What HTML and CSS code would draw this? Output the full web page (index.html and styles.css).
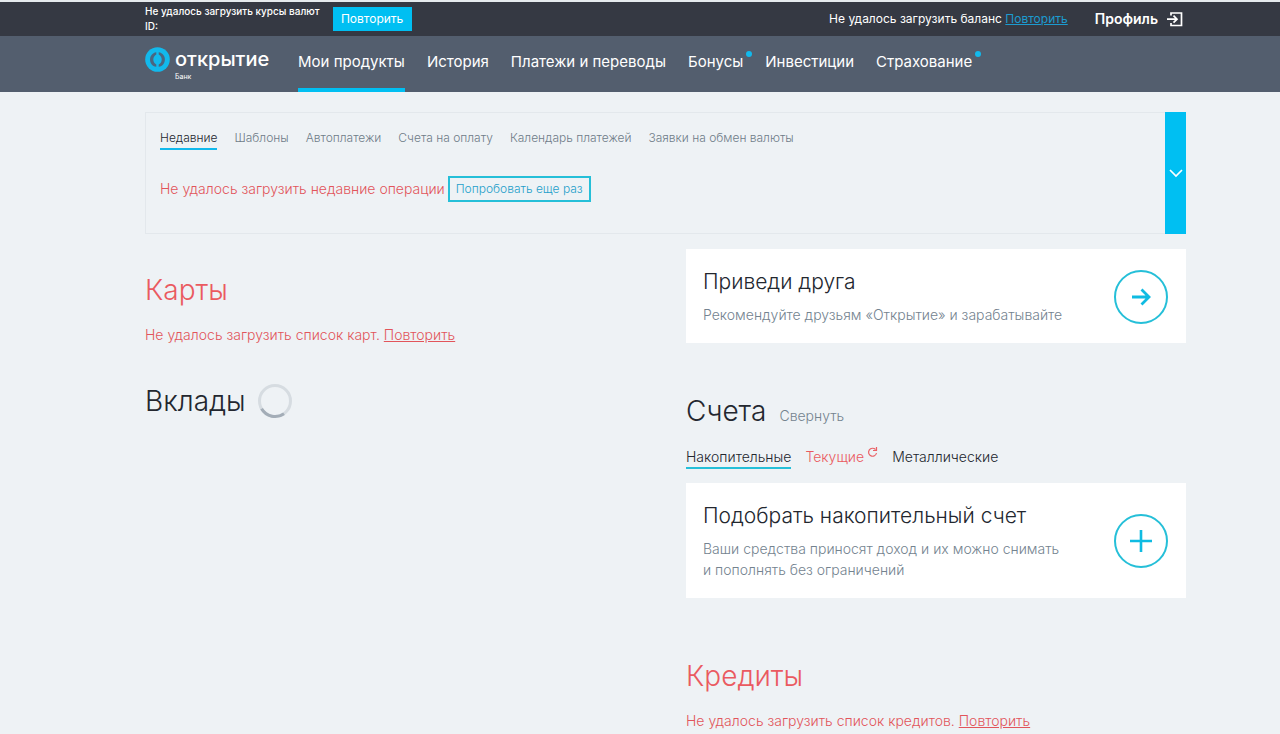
FILE: index.html
```html
<!DOCTYPE html>
<html lang="ru">
<head>
<meta charset="utf-8">
<meta name="viewport" content="width=device-width, initial-scale=1">
<title>Открытие — Мои продукты</title>
<link rel="stylesheet" href="styles.css">
</head>
<body>
<div class="topbar">
  <div class="container topbar-row">
    <p class="rates">Не удалось загрузить курсы валют<br>ID:</p>
    <button class="retry" type="button">Повторить</button>
    <p class="balance">Не удалось загрузить баланс <a href="#">Повторить</a></p>
    <a class="profile" href="#">Профиль</a>
    <button class="logout" type="button" aria-label="Выйти">
      <svg width="16" height="16" viewBox="0 0 16 16" fill="none" stroke="#fff" stroke-width="1.700"><path d="M4 4.500V2h10.500v12.500H4V12M0 8.200h9.500M6.500 4.700L10 8.200l-3.500 3.500"/></svg>
    </button>
  </div>
</div>
<header class="header">
  <div class="container header-row">
    <a class="logo" href="#">
      <svg class="logo-mark" width="25" height="25" viewBox="0 0 25 25"><circle cx="12.500" cy="12.500" r="12.300" fill="#12b9ec"/><path d="M11.300 5.200C3 6.500 3 18.500 11.300 19.800v-2.300C7.300 15.500 7.300 9.500 11.300 7.500zM13.700 5.200c8.300 1.300 8.300 13.300 0 14.600v-2.300c4-2 4-8 0-10z" fill="#4a6680"/></svg>
      <span class="logo-text">открытие<small>Банк</small></span>
    </a>
    <nav class="menu">
      <a class="active" href="#">Мои продукты</a>
      <a href="#">История</a>
      <a href="#">Платежи и переводы</a>
      <a class="marked" href="#">Бонусы</a>
      <a href="#">Инвестиции</a>
      <a class="marked" href="#">Страхование</a>
    </nav>
  </div>
</header>
<main class="container">
  <section class="panel">
    <div class="panel-body">
      <nav class="panel-tabs">
        <a class="active" href="#">Недавние</a>
        <a href="#">Шаблоны</a>
        <a href="#">Автоплатежи</a>
        <a href="#">Счета на оплату</a>
        <a href="#">Календарь платежей</a>
        <a href="#">Заявки на обмен валюты</a>
      </nav>
      <div class="panel-error">
        <span>Не удалось загрузить недавние операции</span>
        <button type="button">Попробовать еще раз</button>
      </div>
    </div>
    <button class="expand" type="button" aria-label="Развернуть">
      <svg width="14" height="9" viewBox="0 0 14 9" fill="none" stroke="#fff" stroke-width="1.700"><path d="M1 1l6 6 6-6"/></svg>
    </button>
  </section>
  <div class="columns">
    <div class="column-left">
      <section>
        <h2 class="failed">Карты</h2>
        <p class="error">Не удалось загрузить список карт. <a href="#">Повторить</a></p>
      </section>
      <section class="deposits">
        <h2>Вклады</h2>
        <svg class="spinner" width="36" height="36" viewBox="0 0 36 36" fill="none" stroke-width="3"><circle cx="18" cy="18" r="15.500" stroke="#d6dce1"/><path d="M4.600 25.800A15.500 15.500 0 0 0 27 30.700" stroke="#a3adb7"/></svg>
      </section>
    </div>
    <div class="column-right">
      <article class="card">
        <div>
          <h3>Приведи друга</h3>
          <p>Рекомендуйте друзьям «Открытие» и зарабатывайте</p>
        </div>
        <button class="round" type="button" aria-label="Пригласить">
          <svg width="22" height="22" viewBox="0 0 22 22" fill="none" stroke="#0fbbe2" stroke-width="2.800"><path d="M2 11h17M11.500 3.500L19 11l-7.500 7.500"/></svg>
        </button>
      </article>
      <section class="accounts">
        <div class="accounts-head">
          <h2>Счета</h2>
          <button class="collapse" type="button">Свернуть</button>
        </div>
        <nav class="account-tabs">
          <a class="active" href="#">Накопительные</a>
          <a class="failed" href="#">Текущие
            <svg width="11" height="11" viewBox="0 0 11 11" fill="none" stroke="#ea6166" stroke-width="1.200"><path d="M8.500 2.500A4 4 0 1 0 9.500 6M9.500 0v3.500H6"/></svg></a>
          <a href="#">Металлические</a>
        </nav>
        <article class="card">
          <div>
            <h3>Подобрать накопительный счет</h3>
            <p>Ваши средства приносят доход и их можно снимать<br>и пополнять без ограничений</p>
          </div>
          <button class="round" type="button" aria-label="Открыть счет">
            <svg width="22" height="22" viewBox="0 0 22 22" fill="none" stroke="#0fbbe2" stroke-width="2.600"><path d="M0 11h22M11 0v22"/></svg>
          </button>
        </article>
      </section>
      <section class="loans">
        <h2 class="failed">Кредиты</h2>
        <p class="error">Не удалось загрузить список кредитов. <a href="#">Повторить</a></p>
      </section>
    </div>
  </div>
</main>
</body>
</html>
```
FILE: styles.css
```css
* { box-sizing: border-box; }
body {
  margin: 0;
  background: #eef2f5;
  color: #23272f;
  font: 300 14px/20px Inter, "Liberation Sans", sans-serif;
}
h2, h3, p { margin: 0; font-weight: 300; }
a { color: inherit; text-decoration: none; }
button { padding: 0; border: 0; background: none; font: inherit; cursor: pointer; }
svg { display: block; }
.container { padding: 0 94px 0 145px; }

.topbar { background: #353943; border-top: 2px solid #e6ebee; color: #fff; }
.topbar-row { display: flex; align-items: center; min-height: 34px; }
.rates { font-size: 10px; line-height: 15px; font-weight: 500; }
.retry { margin-left: 13px; width: 79px; height: 24px; background: #00bff2; color: #fff; font-size: 12px; line-height: 24px; font-weight: 400; }
.balance { margin-left: auto; font-size: 12px; font-weight: 400; }
.balance a { color: #1c9bd0; text-decoration: underline; }
.profile { margin-left: 27px; font-size: 14px; font-weight: 600; }
.logout { margin: 0 3px 0 9px; }

.header { background: #535e6e; color: #fff; }
.header-row { display: flex; min-height: 56px; }
.logo { display: flex; gap: 5px; width: 153px; padding-top: 11px; flex: none; }
.logo-text { font-size: 20px; line-height: 24px; font-weight: 500; }
.logo-text small { display: block; font-size: 7px; line-height: 12px; font-weight: 400; }
.menu { display: flex; gap: 22px; font-size: 15px; line-height: 20px; font-weight: 400; white-space: nowrap; }
.menu a { position: relative; padding-top: 16px; }
.menu .active { border-bottom: 4px solid #00bff2; }
.marked::after { content: ""; position: absolute; top: 15px; right: -9px; width: 6px; height: 6px; border-radius: 50%; background: #12b9ec; }

.panel { display: flex; margin-top: 20px; min-height: 122px; border: 1px solid #e3e8ec; border-right: 0; }
.panel-body { flex: 1; padding: 15px 14px; }
.panel-tabs { display: flex; gap: 17px; font-size: 12px; font-weight: 300; color: #6f7c88; }
.panel-tabs .active { color: #23272f; border-bottom: 2px solid #12b9ec; }
.panel-error { display: flex; align-items: center; gap: 3px; margin-top: 26px; color: #e2555b; }
.panel-error button { height: 26px; padding: 0 6px; border: 2px solid #25bfd8; color: #1f9fca; font-size: 12px; line-height: 20px; }
.expand { display: grid; place-items: center; width: 21px; margin: -1px 0; background: #00bff2; }

.columns { display: grid; grid-template-columns: 1fr 1fr; gap: 41px; margin-top: 15px; }
.column-left { padding-top: 21px; }
h2 { font-size: 28px; line-height: 40px; }
.failed { color: #ea5a60; }
.error { margin-top: 15px; color: #e2555b; }
.error a { text-decoration: underline; }
.deposits { display: flex; align-items: center; gap: 11px; margin-top: 36px; }

.card { display: flex; align-items: center; justify-content: space-between; padding: 19px 18px 18px 17px; background: #fff; }
.card h3 { font-size: 21px; line-height: 28px; }
.card p { margin-top: 8px; line-height: 21px; color: #74838f; }
.round { display: grid; place-items: center; flex: none; width: 54px; height: 54px; border: 2px solid #25bfd8; border-radius: 50%; }
.accounts { margin-top: 48px; }
.accounts-head { display: flex; align-items: baseline; gap: 13px; }
.collapse { color: #74838f; }
.account-tabs { display: flex; gap: 14px; margin: 16px 0 14px; }
.account-tabs a { border-bottom: 2px solid transparent; }
.account-tabs .active { border-bottom-color: #25bfd8; }
.account-tabs .failed { display: flex; gap: 3px; }
.loans { margin-top: 58px; }
```
